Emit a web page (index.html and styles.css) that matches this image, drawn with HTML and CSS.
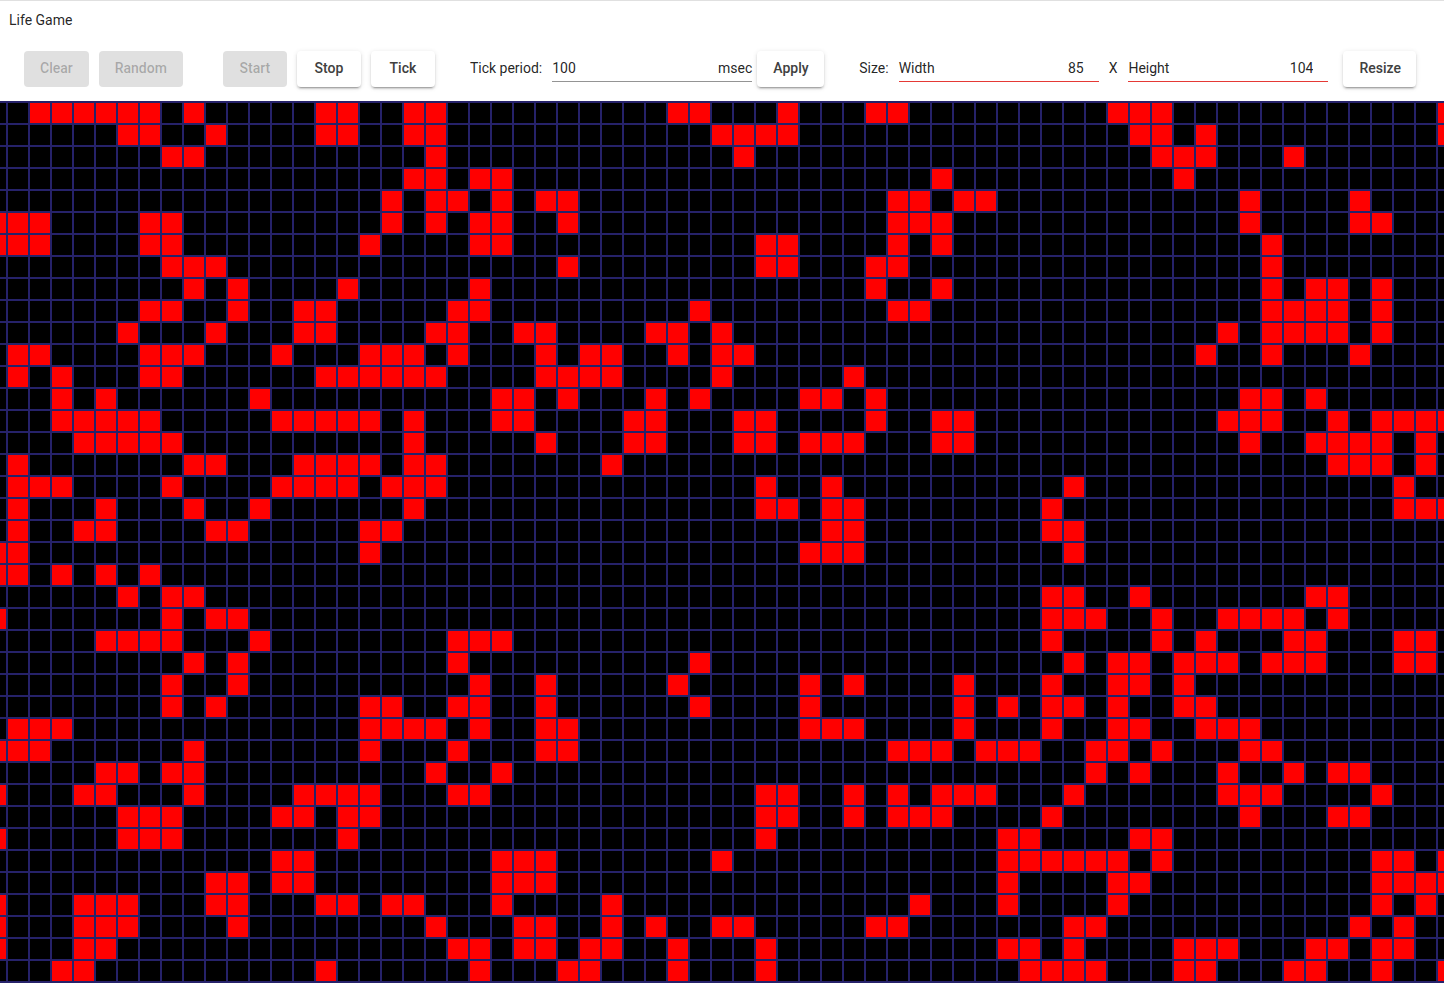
FILE: index.html
```html
<!DOCTYPE html>
<html lang="en">
<head>
  <meta charset="UTF-8">
  <title>Life Game</title>
  <link rel="stylesheet" href="styles.css">
</head>
<body>
  <header class="title">Life Game</header>

  <div class="toolbar">
    <div class="group">
      <button class="btn" disabled>Clear</button>
      <button class="btn" disabled>Random</button>
    </div>
    <div class="group group-run">
      <button class="btn" disabled>Start</button>
      <button class="btn">Stop</button>
      <button class="btn">Tick</button>
    </div>
    <div class="group group-period">
      <span class="caption">Tick period:</span>
      <label class="field">
        <input type="text" value="100">
        <span class="suffix">msec</span>
      </label>
      <button class="btn btn-apply">Apply</button>
    </div>
    <div class="group group-size">
      <span class="caption">Size:</span>
      <label class="field field-invalid">
        <span class="prefix">Width</span>
        <input class="num" type="text" value="85">
      </label>
      <span class="caption times">X</span>
      <label class="field field-invalid">
        <span class="prefix">Height</span>
        <input class="num" type="text" value="104">
      </label>
      <button class="btn btn-resize">Resize</button>
    </div>
  </div>

  <div class="board">
    <canvas id="boardCanvas" width="1476" height="882"></canvas>
  </div>

  <script src="life.js"></script>
</body>
</html>
```

FILE: styles.css
```css
body {
  margin: 0;
  height: 983px;
  overflow: hidden;
  background-color: #fff;
  font-family: Roboto, "Liberation Sans", sans-serif;
  font-size: 14px;
  color: rgba(0, 0, 0, 0.87);
  border-top: 1px solid #e0e0e0;
  box-sizing: border-box;
}
.title {
  height: 39px;
  line-height: 38px;
  padding-left: 9px;
}
.toolbar {
  display: flex;
  align-items: center;
  height: 61px;
  padding: 11px 0 14px 24px;
  box-sizing: border-box;
}
.group {
  display: flex;
  align-items: center;
  gap: 10px;
}
.group-run {
  margin-left: 40px;
}
.group-period {
  margin-left: 35px;
}
.group-size {
  margin-left: 35px;
}
.btn {
  min-width: 64px;
  height: 36px;
  padding: 0 16px 2px;
  border: none;
  border-radius: 4px;
  background-color: #fff;
  color: #404040;
  font-family: inherit;
  font-size: 14px;
  font-weight: 500;
  box-shadow: 0 3px 1px -2px rgba(0, 0, 0, 0.2), 0 2px 2px 0 rgba(0, 0, 0, 0.14), 0 1px 5px 0 rgba(0, 0, 0, 0.12);
  cursor: pointer;
}
.btn:disabled {
  background-color: #e0e0e0;
  color: rgba(0, 0, 0, 0.26);
  box-shadow: none;
  cursor: default;
}
.btn-apply {
  width: 67px;
  margin-left: -5px;
}
.btn-resize {
  width: 73px;
  margin-left: 5px;
}
.caption {
  margin-bottom: 2px;
}
.times {
  margin-right: 1px;
}
.field {
  display: flex;
  align-items: center;
  width: 200px;
  height: 27px;
  margin-bottom: 1px;
  border-bottom: 1px solid #949494;
  box-sizing: border-box;
}
.field-invalid {
  border-bottom-color: #e53935;
}
.field input {
  flex: 1;
  min-width: 0;
  padding: 0;
  border: none;
  outline: none;
  background: none;
  font: inherit;
  color: inherit;
}
.field .num {
  padding-right: 15px;
  text-align: right;
}
.board {
  overflow: hidden;
}
#boardCanvas {
  display: block;
  margin-left: -16px;
}
```

FILE: life.js
```js
// live cells of the visible part of the board, row by row
const liveRows = [
  [2,3,4,5,6,7,9,15,16,19,20,31,32,36,40,41,51,52,53,66],
  [6,7,10,15,16,19,20,33,34,35,36,52,53,55,66],
  [8,9,20,34,53,54,55,59],
  [19,20,22,23,43,54],
  [18,20,21,23,25,26,41,42,44,45,57,62],
  [0,1,2,7,8,18,20,22,23,26,41,42,43,57,62,63],
  [0,1,2,7,8,17,22,23,35,36,41,43,58],
  [8,9,10,26,35,36,40,41,58],
  [9,11,16,22,40,43,58,60,61,63],
  [7,8,11,14,15,21,22,32,41,42,58,59,60,61,63],
  [6,10,14,15,20,21,24,25,30,31,33,56,58,59,60,61,63],
  [1,2,7,8,9,13,17,18,19,21,25,27,28,31,33,34,55,58,62],
  [1,3,7,8,15,16,17,18,19,20,25,26,27,28,33,39],
  [3,5,12,23,24,26,30,32,37,38,40,57,58,60],
  [3,4,5,6,7,13,14,15,16,17,19,23,24,29,30,34,35,40,43,44,56,57,58,61,63,64,65,66],
  [4,5,6,7,8,19,25,29,30,34,35,37,38,39,43,44,57,60,61,62,63,65],
  [1,9,10,14,15,16,17,19,20,28,61,62,63,65],
  [1,2,3,8,13,14,15,16,18,19,20,35,38,49,64],
  [1,5,9,12,19,35,36,38,39,48,64,65,66],
  [1,4,5,10,11,17,18,38,39,48,49],
  [0,1,17,37,38,39,49],
  [0,1,3,5,7],
  [6,8,9,48,49,52,60,61],
  [0,8,10,11,48,49,50,53,56,57,58,59,61],
  [5,6,7,8,12,21,22,23,48,53,55,59,60,64,65],
  [9,11,21,32,49,51,52,54,55,56,58,59,60,64,65],
  [8,11,22,25,31,37,39,44,48,51,52,54],
  [8,10,17,18,21,22,25,32,37,44,46,48,49,51,54,55],
  [1,2,3,17,18,19,20,22,25,26,37,38,39,44,48,51,52,55,56,57],
  [0,1,2,9,17,21,25,26,41,42,43,45,46,47,50,51,53,57,58],
  [5,6,8,9,20,23,50,52,56,59,61,62],
  [0,4,5,9,14,15,16,17,21,22,35,36,39,41,43,44,45,49,56,57,58,63],
  [6,7,8,13,14,16,17,35,36,39,41,42,43,48,57,61,62],
  [0,6,7,8,16,35,46,47,52,53],
  [13,14,23,24,25,33,46,47,48,49,50,51,53,63,64,66],
  [10,11,13,14,23,24,25,46,51,52,63,64,65,66],
  [0,4,5,6,10,11,15,16,18,19,23,28,42,46,51,63,65],
  [0,4,5,6,11,20,24,25,28,30,33,34,40,41,49,50,62,64],
  [0,4,5,21,22,24,25,27,28,31,35,46,47,49,54,55,56,60,61,63,64],
  [3,4,15,22,26,27,31,35,47,48,49,50,54,55,59,60,63,66]
];

const canvas = document.getElementById("boardCanvas");
const ctx = canvas.getContext("2d");
const step = 22;
const line = 2;

ctx.fillStyle = "#26226a";
ctx.fillRect(0, 0, canvas.width, canvas.height);

for (let r = 0; r < liveRows.length; r++) {
  for (let c = 0; c < 67; c++) {
    ctx.fillStyle = liveRows[r].includes(c) ? "#ff0000" : "#000000";
    ctx.fillRect(c * step + line, r * step + line, step - line, step - line);
  }
}
```
